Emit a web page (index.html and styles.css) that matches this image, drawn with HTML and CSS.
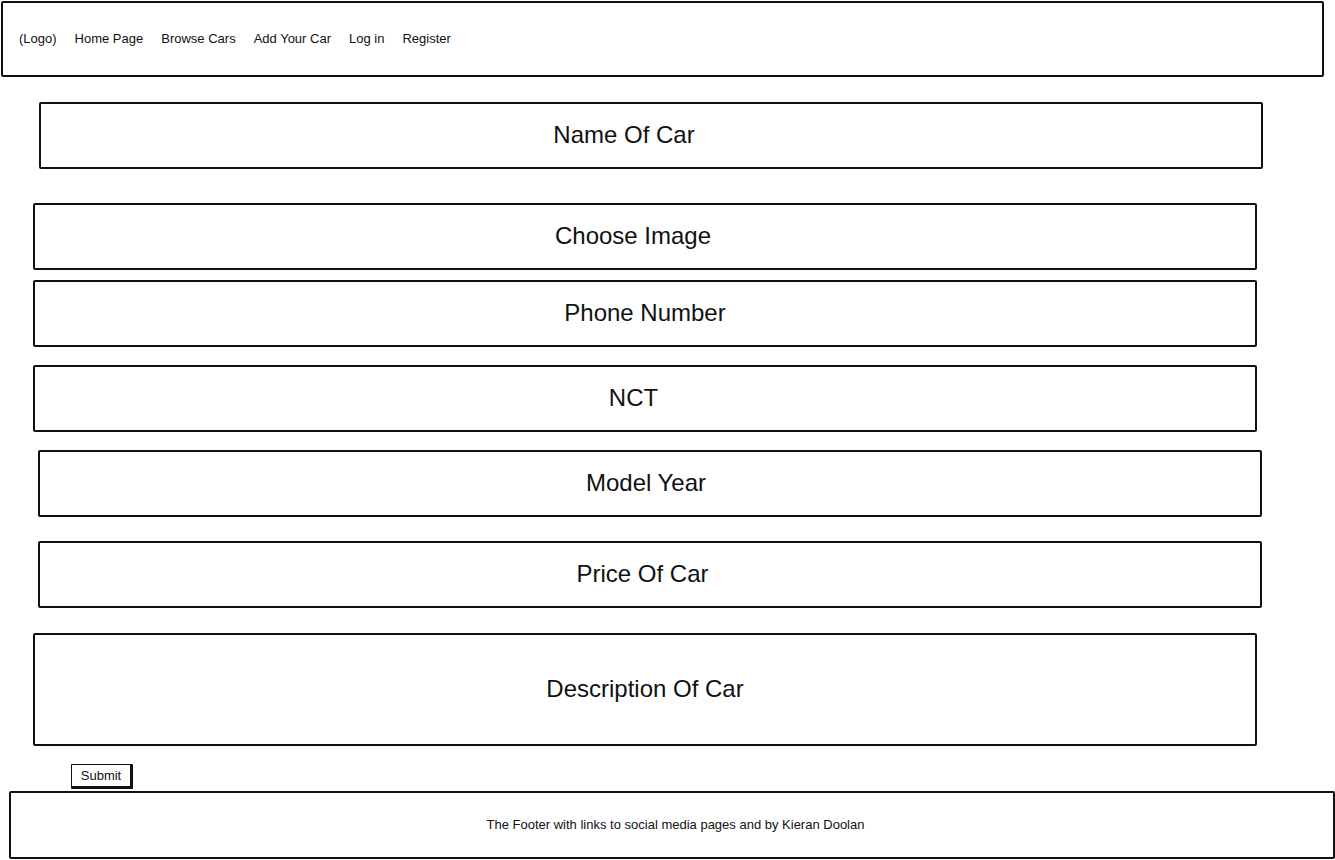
FILE: index.html
```html
<!DOCTYPE html>
<html lang="en">
<head>
<meta charset="utf-8">
<title>Add Your Car</title>
<link rel="stylesheet" href="styles.css">
</head>
<body>
<header class="topbar">
  <nav class="nav">
    <span class="nav-item">(Logo)</span>
    <a class="nav-item" href="#">Home Page</a>
    <a class="nav-item" href="#">Browse Cars</a>
    <a class="nav-item" href="#">Add Your Car</a>
    <a class="nav-item" href="#">Log in</a>
    <a class="nav-item" href="#">Register</a>
  </nav>
</header>
<main class="form">
  <div class="field field-name">Name Of Car</div>
  <div class="field field-image">Choose Image</div>
  <div class="field field-phone">Phone Number</div>
  <div class="field field-nct">NCT</div>
  <div class="field field-year">Model Year</div>
  <div class="field field-price">Price Of Car</div>
  <div class="field field-desc">Description Of Car</div>
  <button class="submit" type="button">Submit</button>
</main>
<footer class="footer">The Footer with links to social media pages and by Kieran Doolan</footer>
</body>
</html>
```

FILE: styles.css
```css
* { box-sizing: border-box; }

html, body {
  margin: 0;
  padding: 0;
  background: #fff;
  color: #111;
  font-family: "Liberation Sans", Arial, sans-serif;
}

body {
  width: 1335px;
  height: 860px;
  overflow: hidden;
}

.topbar {
  margin: 1px 0 0 1px;
  width: 1323px;
  height: 76px;
  border: 2px solid #111;
  border-radius: 2px;
  display: flex;
  align-items: center;
  padding-left: 16px;
  padding-bottom: 2px;
}

.nav {
  display: flex;
  gap: 18px;
  font-size: 13px;
}

.nav-item {
  color: #111;
  text-decoration: none;
}

.form {
  display: flex;
  flex-direction: column;
  align-items: flex-start;
}

.field {
  width: 1224px;
  height: 67px;
  border: 2px solid #111;
  border-radius: 2px;
  display: flex;
  align-items: center;
  justify-content: center;
  font-size: 24px;
  padding-bottom: 2px;
}

.field-name  { margin: 25px 0 0 39px; padding-right: 54px; }
.field-image { margin: 34px 0 0 33px; padding-right: 24px; }
.field-phone { margin: 10px 0 0 33px; }
.field-nct   { margin: 18px 0 0 33px; padding-right: 23px; }
.field-year  { margin: 18px 0 0 38px; padding-right: 8px; }
.field-price { margin: 24px 0 0 38px; padding-right: 15px; }
.field-desc  { margin: 25px 0 0 33px; height: 113px; }

.submit {
  margin: 18px 0 0 71px;
  width: 62px;
  height: 25px;
  padding: 0 0 1px 0;
  background: #fff;
  color: #111;
  border: 1.5px solid #111;
  border-right-width: 3px;
  border-bottom-width: 3px;
  border-radius: 1px;
  font-family: "Liberation Sans", Arial, sans-serif;
  font-size: 13px;
  line-height: 1;
}

.footer {
  margin: 2px 0 0 9px;
  width: 1326px;
  height: 68px;
  border: 2px solid #111;
  border-radius: 2px;
  display: flex;
  align-items: center;
  justify-content: center;
  padding-left: 7px;
  padding-bottom: 2px;
  font-size: 13px;
}
```
